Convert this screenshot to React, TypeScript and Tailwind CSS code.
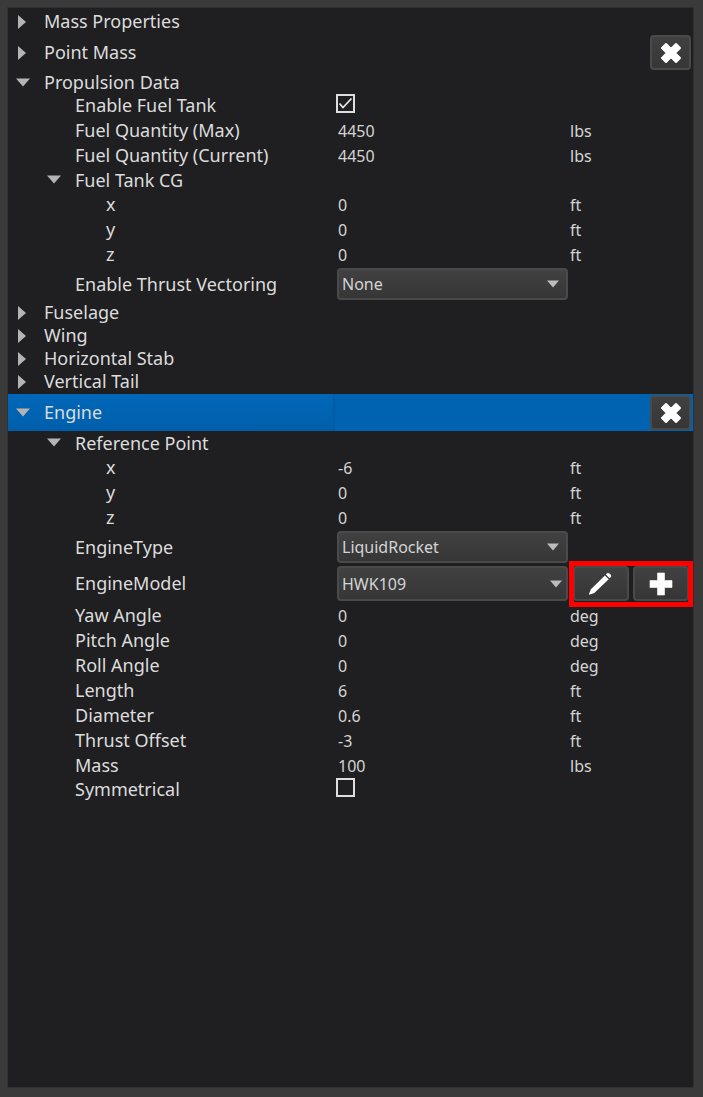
import { useState, type ReactNode } from "react";

const COLUMNS = "grid grid-cols-[329px_232px_minmax(0,1fr)]";
const FIELD_TEXT = "text-[16px] text-[#d4d4d4]";

function Triangle({ open }: { open: boolean }) {
  return (
    <svg viewBox="0 0 14 14" className="size-[14px] fill-[#b4b4b4]" aria-hidden="true">
      <path d={open ? "M0 2.5H14L7 10.5Z" : "M2 0V14L10 7Z"} />
    </svg>
  );
}

function CrossIcon() {
  return (
    <svg viewBox="0 0 24 24" className="size-6" aria-hidden="true">
      <path
        d="M7 3L12 8L17 3L21 7L16 12L21 17L17 21L12 16L7 21L3 17L8 12L3 7Z"
        fill="white"
        stroke="white"
        strokeWidth="2"
        strokeLinejoin="round"
      />
    </svg>
  );
}

function PencilIcon() {
  return (
    <svg viewBox="0 0 24 24" className="size-6" aria-hidden="true">
      <path
        d="M17.6 1.6Q19 .3 20.4 1.5L21.6 2.6Q22.8 4 21.6 5.3L20.6 6.3L16.8 2.6ZM15.9 3.5L19.7 7.2L5.3 20.9L.9 22.6Q-.2 22.9 .1 21.8L1.9 17.2Z"
        fill="white"
      />
    </svg>
  );
}

function PlusIcon() {
  return (
    <svg viewBox="0 0 24 24" className="size-6" aria-hidden="true">
      <path d="M8.5 1H15.5V8.5H23V15.5H15.5V23H8.5V15.5H1V8.5H8.5Z" fill="white" stroke="white" strokeWidth="0.6" strokeLinejoin="round" />
    </svg>
  );
}

function ToolButton({ label, wide, children }: { label: string; wide?: boolean; children: ReactNode }) {
  return (
    <button
      type="button"
      aria-label={label}
      className={`flex h-[35px] items-center justify-center rounded-[4px] border-2 border-[#4a4a4a] bg-linear-to-b from-[#414141] to-[#363636] ${wide ? "w-[56px]" : "w-[41px]"}`}
    >
      {children}
    </button>
  );
}

type SectionProps = {
  label: string;
  open?: boolean;
  nested?: boolean;
  selected?: boolean;
  removable?: boolean;
  children?: ReactNode;
};

function Section({ label, open = false, nested, selected, removable, children }: SectionProps) {
  const [expanded, setExpanded] = useState(open);
  const height = removable ? "mt-px h-[37px]" : nested ? "h-[24px]" : "h-[23px]";
  return (
    <section>
      <div className={`flex items-center justify-between pr-[2px] ${height} ${selected ? "bg-[#0063b1]" : ""}`}>
        <button
          type="button"
          aria-expanded={expanded}
          onClick={() => setExpanded(!expanded)}
          className={`flex h-full w-[327px] items-center gap-[14px] text-left text-[18px] leading-[23px] text-[#dcdcdc] ${nested ? "pl-[39px]" : "pl-[8px]"} ${selected ? "border-r-2 border-[#005ca6] bg-linear-to-b from-[#0067b9] to-[#005fab]" : ""}`}
        >
          <Triangle open={expanded} />
          {label}
        </button>
        {removable && (
          <ToolButton label={`Remove ${label}`}>
            <CrossIcon />
          </ToolButton>
        )}
      </div>
      {expanded && children}
    </section>
  );
}

function RowLabel({ id, label, deep }: { id: string; label: string; deep?: boolean }) {
  return (
    <label htmlFor={id} className={`text-[18px] leading-[23px] whitespace-nowrap text-[#dcdcdc] ${deep ? "pl-[98px]" : "pl-[67px]"}`}>
      {label}
    </label>
  );
}

function ValueRow({ id, label, value, unit, deep }: { id: string; label: string; value: string; unit: string; deep?: boolean }) {
  return (
    <div className={`${COLUMNS} h-[25px] items-center`}>
      <RowLabel id={id} label={label} deep={deep} />
      <input id={id} defaultValue={value} className={`h-[23px] w-full min-w-0 bg-transparent pl-px outline-none ${FIELD_TEXT}`} />
      <span className={`pl-px ${FIELD_TEXT}`}>{unit}</span>
    </div>
  );
}

function CheckRow({ id, label, checked }: { id: string; label: string; checked?: boolean }) {
  return (
    <div className={`${COLUMNS} h-[24px] items-start`}>
      <RowLabel id={id} label={label} />
      <span className="-ml-px grid size-[19px]">
        <input
          id={id}
          type="checkbox"
          defaultChecked={checked}
          className="peer col-start-1 row-start-1 size-[19px] appearance-none border-2 border-[#dedede]"
        />
        <svg viewBox="0 0 19 19" className="pointer-events-none invisible col-start-1 row-start-1 size-[19px] peer-checked:visible" aria-hidden="true">
          <path d="M3.5 9.5L7 13.5L15.5 4.5" fill="none" stroke="#e6e6e6" strokeWidth="1.8" />
        </svg>
      </span>
    </div>
  );
}

function SelectRow({ id, label, options, tall, children }: { id: string; label: string; options: string[]; tall?: boolean; children?: ReactNode }) {
  return (
    <div className={`${COLUMNS} items-center ${tall ? "h-[39px]" : "h-[34px]"}`}>
      <RowLabel id={id} label={label} />
      <span className="grid w-[231px] items-center">
        <select
          id={id}
          className={`col-start-1 row-start-1 w-full appearance-none rounded-[4px] border-2 border-[#4a4a4a] bg-linear-to-b from-[#414141] to-[#363636] pl-[3px] outline-none ${FIELD_TEXT} ${tall ? "h-[35px]" : "h-[32px]"}`}
        >
          {options.map((option) => (
            <option key={option}>{option}</option>
          ))}
        </select>
        <svg
          viewBox="0 0 12 8"
          className={`pointer-events-none col-start-1 row-start-1 h-2 w-3 justify-self-end fill-[#bcbcbc] ${tall ? "mr-[6px]" : "mr-[9px]"}`}
          aria-hidden="true"
        >
          <path d="M0 .5H12L6 7.5Z" />
        </svg>
      </span>
      {children}
    </div>
  );
}

export default function App() {
  return (
    <div className="flex min-h-screen bg-[#3a3a3a] pt-[7px] pr-[9px] pb-[9px] pl-[7px] font-['Noto_Sans',sans-serif]">
      <main className="min-w-0 flex-1 border border-[#303031] bg-[#1f1f21] pt-[2px]">
        <Section label="Mass Properties" />
        <Section label="Point Mass" removable />
        <Section label="Propulsion Data" open>
          <CheckRow id="fuel-tank" label="Enable Fuel Tank" checked />
          <ValueRow id="fuel-max" label="Fuel Quantity (Max)" value="4450" unit="lbs" />
          <ValueRow id="fuel-current" label="Fuel Quantity (Current)" value="4450" unit="lbs" />
          <Section label="Fuel Tank CG" open nested>
            <ValueRow id="cg-x" label="x" value="0" unit="ft" deep />
            <ValueRow id="cg-y" label="y" value="0" unit="ft" deep />
            <ValueRow id="cg-z" label="z" value="0" unit="ft" deep />
          </Section>
          <SelectRow id="thrust-vectoring" label="Enable Thrust Vectoring" options={["None"]} />
        </Section>
        <Section label="Fuselage" />
        <Section label="Wing" />
        <Section label="Horizontal Stab" />
        <Section label="Vertical Tail" />
        <Section label="Engine" open selected removable>
          <Section label="Reference Point" open nested>
            <ValueRow id="ref-x" label="x" value="-6" unit="ft" deep />
            <ValueRow id="ref-y" label="y" value="0" unit="ft" deep />
            <ValueRow id="ref-z" label="z" value="0" unit="ft" deep />
          </Section>
          <SelectRow id="engine-type" label="EngineType" options={["LiquidRocket"]} />
          <SelectRow id="engine-model" label="EngineModel" options={["HWK109"]} tall>
            <div className="relative flex gap-1 pl-1">
              <ToolButton label="Edit engine model" wide>
                <PencilIcon />
              </ToolButton>
              <ToolButton label="Add engine model" wide>
                <PlusIcon />
              </ToolButton>
              <div className="pointer-events-none absolute -top-[5px] -bottom-[6px] left-0 w-[124px] border-5 border-[#ff0000]" />
            </div>
          </SelectRow>
          <ValueRow id="yaw" label="Yaw Angle" value="0" unit="deg" />
          <ValueRow id="pitch" label="Pitch Angle" value="0" unit="deg" />
          <ValueRow id="roll" label="Roll Angle" value="0" unit="deg" />
          <ValueRow id="length" label="Length" value="6" unit="ft" />
          <ValueRow id="diameter" label="Diameter" value="0.6" unit="ft" />
          <ValueRow id="thrust-offset" label="Thrust Offset" value="-3" unit="ft" />
          <ValueRow id="mass" label="Mass" value="100" unit="lbs" />
          <CheckRow id="symmetrical" label="Symmetrical" />
        </Section>
      </main>
    </div>
  );
}
